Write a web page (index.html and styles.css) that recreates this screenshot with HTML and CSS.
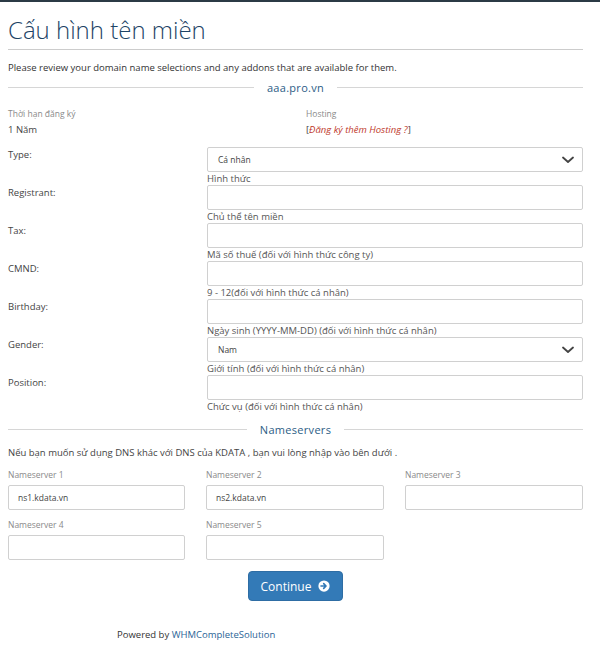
FILE: index.html
```html
<!DOCTYPE html>
<html lang="vi">
<head>
  <meta charset="UTF-8">
  <title>Cấu hình tên miền</title>
  <link rel="stylesheet" href="styles.css">
</head>
<body>
  <div class="topbar"></div>
  <div class="container">
    <h1 class="page-title">Cấu hình tên miền</h1>
    <p class="intro">Please review your domain name selections and any addons that are available for them.</p>

    <div class="divider"><span>aaa.pro.vn</span></div>

    <div class="summary">
      <div class="summary-col">
        <div class="small-label">Thời hạn đăng ký</div>
        <div class="summary-value">1 Năm</div>
      </div>
      <div class="summary-col">
        <div class="small-label">Hosting</div>
        <div class="summary-value">[<a class="hosting-link" href="#">Đăng ký thêm Hosting ?</a>]</div>
      </div>
    </div>

    <!-- Domain contact fields -->
    <div class="form-rows">
      <div class="form-row">
        <label class="row-label">Type:</label>
        <div class="row-field">
          <div class="select">Cá nhân
            <svg class="chevron" viewBox="0 0 12 8"><polyline points="1,1.5 6,6 11,1.5"/></svg>
          </div>
          <div class="help">Hình thức</div>
        </div>
      </div>
      <div class="form-row">
        <label class="row-label">Registrant:</label>
        <div class="row-field">
          <input class="input" type="text">
          <div class="help">Chủ thể tên miền</div>
        </div>
      </div>
      <div class="form-row">
        <label class="row-label">Tax:</label>
        <div class="row-field">
          <input class="input" type="text">
          <div class="help">Mã số thuế (đối với hình thức công ty)</div>
        </div>
      </div>
      <div class="form-row">
        <label class="row-label">CMND:</label>
        <div class="row-field">
          <input class="input" type="text">
          <div class="help">9 - 12(đối với hình thức cá nhân)</div>
        </div>
      </div>
      <div class="form-row">
        <label class="row-label">Birthday:</label>
        <div class="row-field">
          <input class="input" type="text">
          <div class="help">Ngày sinh (YYYY-MM-DD) (đối với hình thức cá nhân)</div>
        </div>
      </div>
      <div class="form-row">
        <label class="row-label">Gender:</label>
        <div class="row-field">
          <div class="select">Nam
            <svg class="chevron" viewBox="0 0 12 8"><polyline points="1,1.5 6,6 11,1.5"/></svg>
          </div>
          <div class="help">Giới tính (đối với hình thức cá nhân)</div>
        </div>
      </div>
      <div class="form-row">
        <label class="row-label">Position:</label>
        <div class="row-field">
          <input class="input" type="text">
          <div class="help">Chức vụ (đối với hình thức cá nhân)</div>
        </div>
      </div>
    </div>

    <div class="divider divider-ns"><span>Nameservers</span></div>

    <p class="ns-intro">Nếu bạn muốn sử dụng DNS khác với DNS của KDATA , bạn vui lòng nhập vào bên dưới .</p>

    <div class="ns-grid">
      <div class="ns-item">
        <div class="small-label">Nameserver 1</div>
        <input class="input" type="text" value="ns1.kdata.vn">
      </div>
      <div class="ns-item">
        <div class="small-label">Nameserver 2</div>
        <input class="input" type="text" value="ns2.kdata.vn">
      </div>
      <div class="ns-item">
        <div class="small-label">Nameserver 3</div>
        <input class="input" type="text">
      </div>
      <div class="ns-item">
        <div class="small-label">Nameserver 4</div>
        <input class="input" type="text">
      </div>
      <div class="ns-item">
        <div class="small-label">Nameserver 5</div>
        <input class="input" type="text">
      </div>
    </div>

    <div class="actions">
      <button class="btn-continue">Continue
        <svg class="btn-icon" viewBox="0 0 16 16">
          <circle cx="8" cy="8" r="7.5" fill="#fff"/>
          <path d="M4 8h6.5M7.6 4.9L10.7 8L7.6 11.1" fill="none" stroke="#337ab7" stroke-width="2.2" stroke-linecap="round" stroke-linejoin="round"/>
        </svg>
      </button>
    </div>

    <p class="powered">Powered by <a href="#">WHMCompleteSolution</a></p>
  </div>
</body>
</html>
```

FILE: styles.css
```css
* {
  box-sizing: border-box;
}

body {
  margin: 0;
  font-family: "Open Sans", "Noto Sans", sans-serif;
  font-size: 9.5px;
  color: #333;
  background: #fff;
}

.topbar {
  height: 2px;
  background: #2b3a45;
}

.container {
  width: 575px;
  margin-left: 8px;
}

.page-title {
  margin: 12px 0 0;
  padding-bottom: 4px;
  font-family: "Open Sans", sans-serif;
  font-size: 24px;
  font-weight: 300;
  line-height: 31px;
  color: #1d4466;
  border-bottom: 1px solid #ccc;
}

.intro {
  margin: 11px 0 0;
  line-height: 13px;
}

.divider {
  display: flex;
  align-items: center;
  gap: 13px;
  margin-top: 5px;
  height: 16px;
  font-size: 11px;
  letter-spacing: 0.3px;
  color: #2c5d86;
}

.divider::before,
.divider::after {
  content: "";
  flex: 1;
  border-top: 1px solid #d6d6d6;
}

.divider-ns {
  margin-top: 8px;
}

.summary {
  display: grid;
  grid-template-columns: 298px 1fr;
  margin-top: 13px;
}

.small-label {
  font-size: 8.5px;
  line-height: 12px;
  color: #8a8a8a;
}

.summary-value {
  margin-top: 3px;
  line-height: 13px;
  color: #444;
}

.hosting-link {
  color: #c0392b;
  font-style: italic;
  text-decoration: none;
}

.form-rows {
  margin-top: 11px;
}

.form-row {
  display: grid;
  grid-template-columns: 199px 1fr;
}

.row-label {
  padding-top: 1px;
  line-height: 13px;
  color: #444;
}

.input,
.select {
  display: block;
  width: 100%;
  height: 25px;
  border: 1px solid #d0d0d0;
  border-radius: 2px;
  background: #fff;
  font-family: inherit;
  font-size: 8.5px;
  color: #444;
  padding: 0 9px;
  margin: 0;
}

.select {
  display: flex;
  align-items: center;
  justify-content: space-between;
  padding: 0 8px 0 10px;
}

.chevron {
  width: 12px;
  height: 8px;
  fill: none;
  stroke: #444;
  stroke-width: 1.8;
  stroke-linecap: round;
  stroke-linejoin: round;
}

.help {
  line-height: 13px;
  color: #555;
}

.ns-intro {
  margin: 9px 0 0;
  line-height: 13px;
  color: #444;
}

.ns-grid {
  display: grid;
  grid-template-columns: 177px 178px 178px;
  column-gap: 21px;
  row-gap: 9px;
  margin-top: 10px;
}

.ns-item .small-label {
  margin-bottom: 4px;
}

.actions {
  display: flex;
  justify-content: center;
  margin-top: 11px;
}

.btn-continue {
  display: inline-flex;
  align-items: center;
  gap: 7px;
  height: 30px;
  padding: 0 12px;
  border: 1px solid #2e6da4;
  border-radius: 4px;
  background: #337ab7;
  color: #fff;
  font-family: inherit;
  font-size: 12px;
}

.btn-icon {
  width: 12px;
  height: 12px;
}

.powered {
  margin: 27px 0 0 109px;
  line-height: 14px;
  color: #333;
}

.powered a {
  color: #2a6496;
  text-decoration: none;
}
```
